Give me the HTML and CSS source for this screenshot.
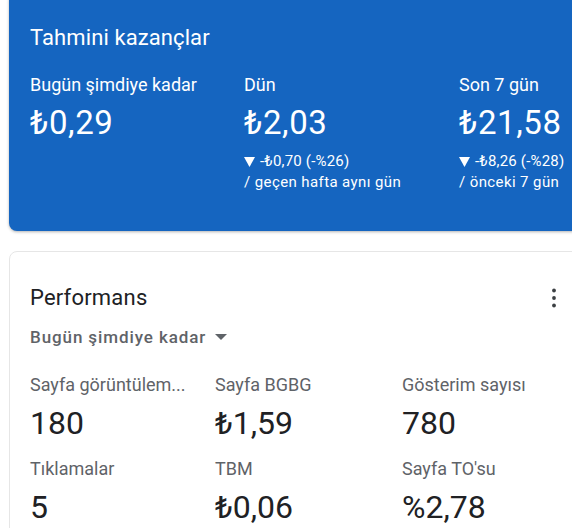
FILE: index.html
```html
<!DOCTYPE html>
<html lang="tr">
<head>
    <meta charset="UTF-8">
    <meta name="viewport" content="width=device-width, initial-scale=1.0">
    <title>Tahmini kazançlar</title>
    <link rel="stylesheet" href="styles.css">
</head>
<body>
    <div class="earnings">
        <h2 class="earnings-title">Tahmini kazançlar</h2>
        <div class="earnings-grid">
            <div class="earning">
                <div class="earning-label">Bugün şimdiye kadar</div>
                <div class="earning-value">₺0,29</div>
            </div>
            <div class="earning">
                <div class="earning-label">Dün</div>
                <div class="earning-value">₺2,03</div>
                <div class="earning-delta">
                    <svg class="delta-arrow" width="11" height="10" viewBox="0 0 11 10"><path d="M0 0h11L5.5 10z" fill="#fff"/></svg>
                    -₺0,70 (-%26)
                </div>
                <div class="earning-compare">/ geçen hafta aynı gün</div>
            </div>
            <div class="earning">
                <div class="earning-label">Son 7 gün</div>
                <div class="earning-value">₺21,58</div>
                <div class="earning-delta">
                    <svg class="delta-arrow" width="11" height="10" viewBox="0 0 11 10"><path d="M0 0h11L5.5 10z" fill="#fff"/></svg>
                    -₺8,26 (-%28)
                </div>
                <div class="earning-compare">/ önceki 7 gün</div>
            </div>
        </div>
    </div>

    <div class="card">
        <div class="card-header">
            <h2 class="card-title">Performans</h2>
            <svg class="more-icon" width="24" height="24" viewBox="0 0 24 24">
                <circle cx="12" cy="4.5" r="1.9" fill="#3c4043"/>
                <circle cx="12" cy="12" r="1.9" fill="#3c4043"/>
                <circle cx="12" cy="19.5" r="1.9" fill="#3c4043"/>
            </svg>
        </div>
        <div class="range-select">
            Bugün şimdiye kadar
            <svg class="range-arrow" width="12" height="6" viewBox="0 0 12 6"><path d="M0 0h12L6 6z" fill="#5f6368"/></svg>
        </div>
        <div class="metrics">
            <div class="metric">
                <div class="metric-label">Sayfa görüntülem...</div>
                <div class="metric-value">180</div>
            </div>
            <div class="metric">
                <div class="metric-label">Sayfa BGBG</div>
                <div class="metric-value">₺1,59</div>
            </div>
            <div class="metric">
                <div class="metric-label">Gösterim sayısı</div>
                <div class="metric-value">780</div>
            </div>
            <div class="metric">
                <div class="metric-label">Tıklamalar</div>
                <div class="metric-value">5</div>
            </div>
            <div class="metric">
                <div class="metric-label">TBM</div>
                <div class="metric-value">₺0,06</div>
            </div>
            <div class="metric">
                <div class="metric-label">Sayfa TO'su</div>
                <div class="metric-value">%2,78</div>
            </div>
        </div>
    </div>
</body>
</html>
```

FILE: styles.css
```css
* {
    margin: 0;
    padding: 0;
    box-sizing: border-box;
    font-family: Roboto, "Liberation Sans", sans-serif;
}

body {
    background: #fff;
    overflow: hidden;
}

h2 {
    font-weight: 400;
}

.earnings {
    margin: -8px -20px 0 9px;
    padding: 32px 0 38px 21px;
    background: #1565c0;
    color: #fff;
    border-radius: 8px;
    box-shadow: 0 1px 3px rgba(0,0,0,0.3);
}

.earnings-title {
    font-size: 22px;
    line-height: 28px;
    letter-spacing: 0.1px;
}

.earnings-grid {
    display: grid;
    grid-template-columns: 214px 215px 1fr;
    margin-top: 21px;
}

.earning-label {
    font-size: 18px;
    line-height: 24px;
}

.earning-value {
    font-size: 33px;
    line-height: 40px;
    margin-top: 6px;
    letter-spacing: 0.6px;
}

.earning-delta {
    display: flex;
    align-items: center;
    gap: 5px;
    font-size: 15px;
    line-height: 21px;
    margin-top: 8px;
    letter-spacing: 0.2px;
}

.earning-compare {
    font-size: 15px;
    line-height: 21px;
    letter-spacing: 0.4px;
}

.card {
    margin: 20px -20px 0 9px;
    padding: 32px 25px 0 20px;
    border: 1px solid #e6e6e6;
    border-radius: 8px;
    height: 400px;
}

.card-header {
    display: flex;
    justify-content: space-between;
    align-items: center;
}

.card-title {
    font-size: 22px;
    line-height: 28px;
    color: #202124;
    letter-spacing: 0.2px;
}

.range-select {
    display: flex;
    align-items: center;
    gap: 9px;
    margin-top: 13px;
    font-size: 17px;
    line-height: 24px;
    font-weight: 500;
    color: #5f6368;
    letter-spacing: 0.9px;
}

.metrics {
    display: grid;
    grid-template-columns: 185px 187px 1fr;
    row-gap: 14px;
    margin-top: 24px;
}

.metric-label {
    font-size: 18px;
    line-height: 24px;
    color: #5f6368;
}

.metric-value {
    font-size: 32px;
    line-height: 40px;
    margin-top: 6px;
    color: #202124;
}
```
